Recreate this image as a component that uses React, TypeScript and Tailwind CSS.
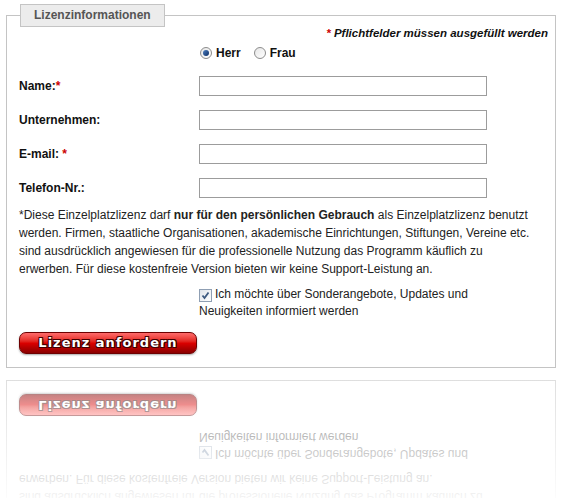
import React from 'react';

const fields = [
  { label: 'Name:', star: '*' },
  { label: 'Unternehmen:', star: '' },
  { label: 'E-mail:', star: ' *' },
  { label: 'Telefon-Nr.:', star: '' },
];

function Radio({ checked }: { checked?: boolean }) {
  return (
    <span className="flex h-[12px] w-[12px] items-center justify-center rounded-full border border-[#8c8c8c] bg-gradient-to-br from-[#e6e6e6] to-white">
      {checked && (
        <span className="h-[6px] w-[6px] rounded-full bg-gradient-to-br from-[#4d7fc0] to-[#0f2f66]" />
      )}
    </span>
  );
}

function Checkbox() {
  return (
    <span className="flex h-[13px] w-[13px] items-center justify-center border border-[#8f9fb3] bg-gradient-to-br from-[#dfe4ea] to-white">
      <svg width="9" height="9" viewBox="0 0 9 9">
        <path d="M1.5 4.5 L3.5 7 L7.5 1.5" fill="none" stroke="#3d5a80" strokeWidth="1.8" />
      </svg>
    </span>
  );
}

function Form() {
  return (
    <fieldset className="w-[550px] border border-[#c4c4c4] pr-[7px] pb-[13px] pl-[12px]">
      <legend className="ml-px border border-[#c4c4c4] bg-[#ececec] px-[13px] leading-[21px] font-bold text-[12px] text-[#555]">
        Lizenzinformationen
      </legend>

      <p className="-mt-[1px] text-right text-[11.5px] leading-[14px] font-bold italic text-[#111]">
        <span className="text-[#c00]">*</span> Pflichtfelder müssen ausgefüllt werden
      </p>

      <div className="mt-[6px] flex h-[14px] items-center pl-[181px] text-[12px] font-bold text-[#111]">
        <label className="flex items-center gap-[4px]">
          <Radio checked />
          Herr
        </label>
        <label className="ml-[13px] flex items-center gap-[4px]">
          <Radio />
          Frau
        </label>
      </div>

      <div className="mt-[16px] flex flex-col gap-[14px]">
        {fields.map((f) => (
          <div key={f.label} className="flex h-[20px] items-center">
            <span className="w-[180px] text-[12px] font-bold text-[#111]">
              {f.label}
              <span className="text-[#c00]">{f.star}</span>
            </span>
            <input className="h-[20px] w-[288px] border border-[#9c9c9c] bg-white" />
          </div>
        ))}
      </div>

      <p className="mt-[8px] text-[12px] leading-[18px] whitespace-nowrap text-[#222]">
        *Diese Einzelplatzlizenz darf <b>nur für den persönlichen Gebrauch</b> als Einzelplatzlizenz benutzt
        <br />
        werden. Firmen, staatliche Organisationen, akademische Einrichtungen, Stiftungen, Vereine etc.
        <br />
        sind ausdrücklich angewiesen für die professionelle Nutzung das Programm käuflich zu
        <br />
        erwerben. Für diese kostenfreie Version bieten wir keine Support-Leistung an.
      </p>

      <div className="mt-[8px] pl-[180px] text-[12px] leading-[17px] text-[#222]">
        <span className="mr-[3px] inline-flex translate-y-[2px]">
          <Checkbox />
        </span>
        Ich möchte über Sonderangebote, Updates und
        <br />
        Neuigkeiten informiert werden
      </div>

      <button className="mt-[12px] flex h-[22px] w-[178px] items-center justify-center rounded-[7px] border border-[#6e0000] bg-gradient-to-b from-[#ff6a6a] via-[#dc0000] to-[#8a0000] font-['DejaVu_Sans',sans-serif] text-[13px] font-bold tracking-[1px] text-white shadow-[0_1px_2px_rgba(0,0,0,0.35)] [text-shadow:0_0_1px_#300,1px_1px_0_#400,-1px_-1px_0_#400,1px_-1px_0_#400,-1px_1px_0_#400]">
        Lizenz anfordern
      </button>
    </fieldset>
  );
}

export default function App() {
  return (
    <div className="h-[498px] w-[562px] overflow-hidden bg-white pt-[4px] pl-[6px] font-['Liberation_Sans',Arial,sans-serif]">
      <Form />
      <div aria-hidden="true" className="relative mt-[12px] h-[118px] overflow-hidden">
        <div className="-scale-y-100 origin-top translate-y-[364px]">
          <Form />
        </div>
        <div className="absolute inset-0 bg-gradient-to-b from-white/45 to-white/95" />
      </div>
    </div>
  );
}
